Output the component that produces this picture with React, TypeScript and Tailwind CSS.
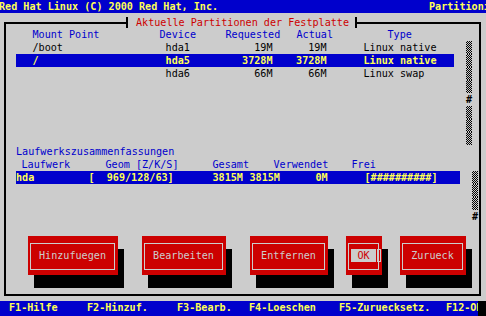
import React from 'react';

type Part = { mount: string; dev: string; req: string; act: string; type: string; sel?: boolean };

const parts: Part[] = [
  { mount: '/boot', dev: 'hda1', req: '19M', act: '19M', type: 'Linux native' },
  { mount: '/', dev: 'hda5', req: '3728M', act: '3728M', type: 'Linux native', sel: true },
  { mount: '', dev: 'hda6', req: '66M', act: '66M', type: 'Linux swap' },
];

// one cell of the text-mode scrollbar, either shaded track or the "#" thumb
const Track = () => (
  <div className="h-[13px] w-[6px] bg-[image:repeating-conic-gradient(#000_0%_25%,#cccccc_0%_50%)] bg-[length:2px_2px]" />
);
const Thumb = () => <div className="h-[13px] w-[6px] text-center font-bold leading-[13px]">#</div>;

const Button: React.FC<{ label: string; className: string; focus?: boolean }> = ({ label, className, focus }) => (
  <div className={`h-[39px] shrink-0 bg-[#cc0000] pl-[2px] pr-[3px] pt-[7px] pb-[5px] shadow-[6px_13px_0_0_#000] ${className}`}>
    <div className="h-full border border-[#cccccc] pt-[5px] text-center text-[#cccccc]">
      {focus ? (
        <span className="relative inline-block bg-[#cccccc] text-[#cc0000]">
          {' ' + label + ' '}
          <span className="absolute left-full top-0 ml-[1px] h-[13px] w-[4px] border border-[#cccccc]" />
        </span>
      ) : (
        label
      )}
    </div>
  </div>
);

export default function App() {
  return (
    <div className="w-[486px] h-[316px] overflow-hidden whitespace-pre bg-[#cccccc] text-black text-[10.125px] leading-[13px] font-['DejaVu_Sans_Mono','Liberation_Mono',monospace]">
      {/* Title line */}
      <div className="flex h-[13px] overflow-hidden bg-[#0000cc] font-bold text-[#ffff55]">
        <span className="w-[430px] shrink-0 -ml-[1px]">Red Hat Linux (C) 2000 Red Hat, Inc.</span>
        <span className="shrink-0">Partitionierung</span>
      </div>

      <div className="h-[288px] pt-[9px] pl-[4px]">
        <div className="relative h-[274px] w-[477px] border-2 border-black pt-[4px]">
          <div className="absolute left-[120px] -top-[7px] h-[11px] border-x-2 border-black bg-[#cccccc] pl-[8px] pr-[5.5px] leading-[11px] text-[#cc0000]">
            Aktuelle Partitionen der Festplatte
          </div>

          {/* Partition list */}
          <div className="ml-[10px] flex h-[13px] text-[#0000cc]">
            <span className="w-[143.5px] shrink-0 pl-[16.5px]">Mount Point</span>
            <span className="w-[66px] shrink-0">Device</span>
            <span className="w-[71px] shrink-0">Requested</span>
            <span className="w-[91px] shrink-0">Actual</span>
            <span>Type</span>
          </div>
          <div className="ml-[10px] flex">
            <div className="h-[104px] w-[438px]">
              {parts.map((p, i) => (
                <div key={i} className={`flex h-[13px] ${p.sel ? 'bg-[#0000cc] font-bold text-[#ffff55]' : ''}`}>
                  <span className="w-[143.5px] shrink-0 pl-[16.5px]">{p.mount}</span>
                  <span className="w-[66px] shrink-0">{' ' + p.dev}</span>
                  <span className="w-[47px] shrink-0 text-right">{p.req}</span>
                  <span className="w-[54px] shrink-0 text-right">{p.act}</span>
                  <span className="pl-[37px]">{p.type}</span>
                </div>
              ))}
            </div>
            <div className="ml-[12px] flex flex-col">
              <Track /><Track /><Track /><Track /><Thumb /><Track /><Track /><Track />
            </div>
          </div>

          {/* Drive summary */}
          <div className="ml-[10px] h-[13px] text-[#0000cc]">Laufwerkszusammenfassungen</div>
          <div className="ml-[10px] flex h-[13px] text-[#0000cc]">
            <span className="w-[89.5px] shrink-0 pl-[5.5px]">Laufwerk</span>
            <span className="w-[107px] shrink-0">Geom [Z/K/S]</span>
            <span className="w-[61px] shrink-0">Gesamt</span>
            <span className="w-[78px] shrink-0">Verwendet</span>
            <span>Frei</span>
          </div>
          <div className="ml-[10px] flex">
            <div className="h-[52px] w-[444px]">
              <div className="flex h-[13px] bg-[#0000cc] font-bold text-[#ffff55]">
                <span className="w-[72.5px] shrink-0">hda</span>
                <span className="w-[124px] shrink-0">[  969/128/63]</span>
                <span className="w-[37px] shrink-0">3815M</span>
                <span className="w-[66px] shrink-0">3815M</span>
                <span className="w-[49px] shrink-0">0M</span>
                <span>[##########]</span>
              </div>
            </div>
            <div className="ml-[12px] flex flex-col">
              <Track /><Track /><Track /><Thumb />
            </div>
          </div>

          {/* Buttons */}
          <div className="ml-[22px] mt-[13px] flex items-start">
            <Button label="Hinzufuegen" className="w-[90px]" />
            <Button label="Bearbeiten" className="ml-[24px] w-[84px]" />
            <Button label="Entfernen" className="ml-[24px] w-[78px]" />
            <Button label="OK" className="ml-[18px] w-[36px]" focus />
            <Button label="Zurueck" className="ml-[18px] w-[66px]" />
          </div>
        </div>
      </div>

      {/* Help line */}
      <div className="flex h-[15px] bg-[#0000cc] font-bold text-[#ffff55]">
        <div className="flex w-[478px] overflow-hidden pl-[9px]">
          <span className="w-[78px] shrink-0">F1-Hilfe</span>
          <span className="w-[90px] shrink-0">F2-Hinzuf.</span>
          <span className="w-[72px] shrink-0">F3-Bearb.</span>
          <span className="w-[90px] shrink-0">F4-Loeschen</span>
          <span className="w-[107px] shrink-0">F5-Zuruecksetz.</span>
          <span className="shrink-0">F12-OK</span>
        </div>
        <div className="w-[8px] bg-black" />
      </div>
    </div>
  );
}
